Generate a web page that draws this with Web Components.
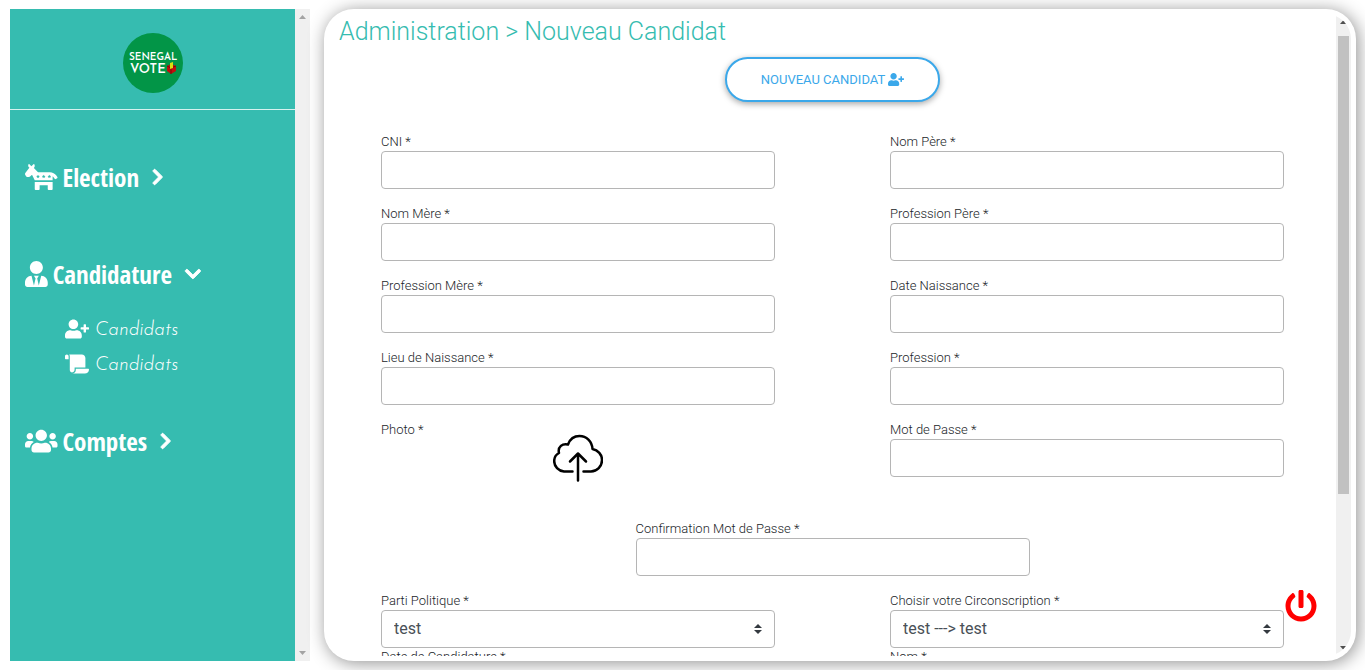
<!DOCTYPE html>
<html lang="fr">
<head>
<meta charset="utf-8">
<meta name="viewport" content="width=device-width, initial-scale=1">
<title>Senegal Vote - Administration</title>
<style>
  html, body { margin: 0; height: 100%; background: #fff; }
  body { font-family: Roboto, sans-serif; color: #444; overflow: hidden; }
</style>
</head>
<body>
<sv-app>
  <sv-sidebar slot="sidebar">
    <sv-menu icon="democrat" label="Election"></sv-menu>
    <sv-menu icon="tie" label="Candidature" open>
      <sv-menu-link icon="plus">Candidats</sv-menu-link>
      <sv-menu-link icon="scroll">Candidats</sv-menu-link>
    </sv-menu>
    <sv-menu icon="users" label="Comptes"></sv-menu>
  </sv-sidebar>
  <sv-panel heading="Administration &gt; Nouveau Candidat">
    <sv-button slot="action" icon="plus">NOUVEAU CANDIDAT</sv-button>
    <sv-form>
      <sv-field label="CNI *"></sv-field>
      <sv-field label="Nom Père *"></sv-field>
      <sv-field label="Nom Mère *"></sv-field>
      <sv-field label="Profession Père *"></sv-field>
      <sv-field label="Profession Mère *"></sv-field>
      <sv-field label="Date Naissance *"></sv-field>
      <sv-field label="Lieu de Naissance *"></sv-field>
      <sv-field label="Profession *"></sv-field>
      <sv-upload label="Photo *"></sv-upload>
      <sv-field label="Mot de Passe *" type="password"></sv-field>
      <sv-field class="center" label="Confirmation Mot de Passe *" type="password"></sv-field>
      <sv-select label="Parti Politique *" value="test"></sv-select>
      <sv-select label="Choisir votre Circonscription *" value="test ---&gt; test"></sv-select>
      <sv-field label="Date de Candidature *"></sv-field>
      <sv-field label="Nom *"></sv-field>
    </sv-form>
  </sv-panel>
</sv-app>

<script>
const star = x => `M${x} 211l11 22 24 4-17 17 4 24-22-11-22 11 4-24-17-17 24-4z`;
const ICONS = {
  democrat: [640, 'M637.3 256.9l-19.6-29.4c-28.2-42.3-75.3-67.5-126.1-67.5H256l-81.2-81.2c20.1-20.1 22.6-51.1 7.5-73.9-3.4-5.2-10.8-5.9-15.2-1.5l-41.8 41.8L82.4 2.4c-3.6-3.6-9.6-3-12.4 1.2-12.3 18.6-10.3 44 6.1 60.4 3.3 3.3 7.3 5.3 11.3 7.5-2.2 1.7-4.7 3.1-6.4 5.4L6.4 176.2c-7.3 9.7-8.4 22.7-3 33.5l14.3 28.6c5.4 10.8 16.5 17.7 28.6 17.7h31c8.5 0 16.6-3.4 22.6-9.4L138 212l54 108h352v-77.8c16.2 12.2 18.3 17.6 40.1 50.3 4.9 7.4 14.8 9.3 22.2 4.4l26.6-17.7c7.3-5 9.3-14.9 4.4-22.3zM192 496c0 8.8 7.2 16 16 16h64c8.8 0 16-7.2 16-16v-80h160v80c0 8.8 7.2 16 16 16h64c8.8 0 16-7.2 16-16V352H192v144z' + star(256) + star(368) + star(480)],
  tie: [448, 'M224 256c70.7 0 128-57.3 128-128S294.7 0 224 0 96 57.3 96 128s57.3 128 128 128zm95.8 32.6L272 480l-32-136 32-56h-96l32 56-32 136-47.8-191.4C56.9 292 0 350.3 0 422.4V464c0 26.5 21.5 48 48 48h352c26.5 0 48-21.5 48-48v-41.6c0-72.1-56.9-130.4-128.2-133.8z'],
  users: [640, 'M96 224c35.3 0 64-28.7 64-64s-28.7-64-64-64-64 28.7-64 64 28.7 64 64 64zm448 0c35.3 0 64-28.7 64-64s-28.7-64-64-64-64 28.7-64 64 28.7 64 64 64zm32 32h-64c-17.6 0-33.5 7.1-45.1 18.6 40.3 22.1 68.9 62 75.1 109.4h66c17.7 0 32-14.3 32-32v-32c0-35.3-28.7-64-64-64zm-256 0c61.9 0 112-50.1 112-112S381.9 32 320 32 208 82.1 208 144s50.1 112 112 112zm76.8 32h-8.3c-20.8 10-43.9 16-68.5 16s-47.6-6-68.5-16h-8.3C179.6 288 128 339.6 128 403.2V432c0 26.5 21.5 48 48 48h288c26.5 0 48-21.5 48-48v-28.8c0-63.6-51.6-115.2-115.2-115.2zm-223.7-13.4C161.5 263.1 145.6 256 128 256H64c-35.3 0-64 28.7-64 64v32c0 17.7 14.3 32 32 32h65.9c6.3-47.4 34.9-87.3 75.2-109.4z'],
  plus: [640, 'M624 208h-64v-64c0-8.8-7.2-16-16-16h-32c-8.8 0-16 7.2-16 16v64h-64c-8.8 0-16 7.2-16 16v32c0 8.8 7.2 16 16 16h64v64c0 8.8 7.2 16 16 16h32c8.8 0 16-7.2 16-16v-64h64c8.8 0 16-7.2 16-16v-32c0-8.8-7.2-16-16-16zm-400 48c70.7 0 128-57.3 128-128S294.7 0 224 0 96 57.3 96 128s57.3 128 128 128zm89.6 32h-16.7c-22.2 10.2-46.9 16-72.9 16s-50.6-5.8-72.9-16h-16.7C60.2 288 0 348.2 0 422.4V464c0 26.5 21.5 48 48 48h352c26.5 0 48-21.5 48-48v-41.6c0-74.2-60.2-134.4-134.4-134.4z'],
  scroll: [640, 'M48 0C21.53 0 0 21.53 0 48v64c0 8.84 7.16 16 16 16h80V48C96 21.53 74.47 0 48 0zm208 412.57V352h288V96c0-52.94-43.06-96-96-96H111.59C121.74 13.41 128 29.92 128 48v368c0 38.87 34.65 69.65 74.75 63.12C234.22 474 256 444.46 256 412.57zM288 384v32c0 52.93-43.06 96-96 96h336c61.86 0 112-50.14 112-112 0-8.84-7.16-16-16-16H288z'],
  right: [320, 'M285.476 272.971L91.132 467.314c-9.373 9.373-24.569 9.373-33.941 0l-22.667-22.667c-9.357-9.357-9.375-24.522-.04-33.901L188.505 256 34.484 101.255c-9.335-9.379-9.317-24.544.04-33.901l22.667-22.667c9.373-9.373 24.569-9.373 33.941 0L285.475 239.03c9.373 9.372 9.373 24.568.001 33.941z'],
  down: [448, 'M207.029 381.476L12.686 187.132c-9.373-9.373-9.373-24.569 0-33.941l22.667-22.667c9.357-9.357 24.522-9.375 33.901-.04L224 284.505l154.745-154.021c9.379-9.335 24.544-9.317 33.901.04l22.667 22.667c9.373 9.373 9.373 24.569 0 33.941L240.971 381.476c-9.373 9.372-24.569 9.372-33.942 0z'],
  power: [512, 'M400 54.1c63 45 104 118.6 104 201.9 0 136.8-110.8 247.7-247.5 248C120 504.3 8.2 393 8 256.4 7.9 173.1 48.9 99.3 111.8 54.2c11.7-8.3 28-4.8 35 7.7L162.6 90c5.9 10.5 3.1 23.8-6.6 31-41.5 30.8-68 79.6-68 134.9-.1 92.3 74.5 168.1 168 168.1 91.6 0 168.6-74.2 168-169.1-.3-51.8-24.7-101.8-68.1-134-9.7-7.2-12.4-20.5-6.5-30.9l15.8-28.1c7-12.4 23.2-16.1 34.8-7.8zM296 264V24c0-13.3-10.7-24-24-24h-32c-13.3 0-24 10.7-24 24v240c0 13.3 10.7 24 24 24h32c13.3 0 24-10.7 24-24z']
};
const svg = (name, cls = '') => `<svg class="${cls}" viewBox="0 0 ${ICONS[name][0]} 512" fill="currentColor" fill-rule="evenodd" aria-hidden="true"><path d="${ICONS[name][1]}"/></svg>`;

const define = (tag, render) => customElements.define(tag, class extends HTMLElement {
  constructor() {
    super();
    this.attachShadow({ mode: 'open' }).innerHTML =
      '<style>*{box-sizing:border-box}</style>' + render(this);
  }
});

define('sv-app', () => `
<style>
  :host { display: flex; gap: 14px; box-sizing: border-box; height: 100vh; padding: 9px 9px 9px 10px; }
  ::slotted(sv-sidebar) { flex: 0 0 300px; }
  ::slotted(sv-panel) { flex: 1; min-width: 0; }
</style>
<slot name="sidebar"></slot><slot></slot>`);

define('sv-scrollbar', el => `
<style>
  :host { display: flex; flex-direction: column; flex: 0 0 15px; background: #f0f0f0; color: #505050; }
  :host([idle]) { color: #a3a3a3; }
  svg { display: block; width: 15px; height: 17px; flex: none; }
  .track { flex: 1; padding: 5px 2px 0; }
  .thumb { height: 76%; background: #c1c1c1; }
</style>
<svg viewBox="0 0 15 17" fill="currentColor"><path d="M4 10h7L7.500 6z"/></svg>
<div class="track">${el.hasAttribute('idle') ? '' : '<div class="thumb"></div>'}</div>
<svg viewBox="0 0 15 17" fill="currentColor"><path d="M4 7h7L7.500 11z"/></svg>`);

define('sv-logo', () => `
<style>
  :host { display: block; width: 60px; height: 60px; }
  svg { display: block; }
</style>
<svg width="60" height="60" viewBox="0 0 60 60" role="img" aria-label="Senegal Vote">
  <circle cx="30" cy="30" r="30" fill="#029547"/>
  <g fill="#fff" font-family="Josefin Sans, Lato, sans-serif" font-weight="600">
    <text x="6" y="27" font-size="10">SENEGAL</text>
    <text x="7" y="40" font-size="13">VOTE</text>
  </g>
  <path d="M44 33l4-2 5 2v5l-5 3-4-3z" fill="#c20d0d"/>
  <path d="M48 35v6M44 33l4 2 5-2" fill="none" stroke="#760b0b"/>
  <path d="M47 30l3-1v6l-3 1z" fill="#d7df10"/>
</svg>`);

define('sv-sidebar', () => `
<style>
  :host { display: flex; }
  .body { flex: 1; background: #36bcb0; color: #fff; overflow-y: auto; scrollbar-width: none; }
  header { display: flex; justify-content: center; height: 101px; padding-top: 24px; border-bottom: 1px solid #d7f2ef; }
  nav { padding: 47px 15px 0; }
</style>
<div class="body">
  <header><sv-logo></sv-logo></header>
  <nav><slot></slot></nav>
</div>
<sv-scrollbar idle></sv-scrollbar>`);

define('sv-menu', el => `
<style>
  :host { display: block; padding-bottom: 57px; }
  :host([open]) { padding-bottom: 40px; }
  button { display: flex; align-items: center; height: 40px; padding: 0; border: 0; background: none; color: inherit;
    font: 700 25px/40px "Open Sans Condensed", "Liberation Sans Narrow", "Open Sans", sans-serif; }
  .icon { height: 26px; margin-right: 5px; }
  .arrow { height: 18px; margin-left: 13px; overflow: visible; stroke: currentColor; stroke-width: 28; }
  ul { display: flex; flex-direction: column; margin: 0; padding: 17px 0 0 40px; }
  ul[hidden] { display: none; }
</style>
<button type="button" aria-expanded="${el.hasAttribute('open')}">
  ${svg(el.getAttribute('icon'), 'icon')}<span>${el.getAttribute('label')}</span>${svg(el.hasAttribute('open') ? 'down' : 'right', 'arrow')}
</button>
<ul ${el.hasAttribute('open') ? '' : 'hidden'}><slot></slot></ul>`);

define('sv-menu-link', el => `
<style>
  :host { display: block; }
  a { display: flex; align-items: center; gap: 6px; height: 35px; color: inherit; text-decoration: none;
    font: italic 300 19px/20px "Josefin Sans", Lato, sans-serif; }
  svg { width: 24px; height: 20px; }
  span { padding-top: 5px; }
</style>
<a href="#">${svg(el.getAttribute('icon'))}<span><slot></slot></span></a>`);

define('sv-panel', el => `
<style>
  :host { display: flex; position: relative; box-sizing: border-box; padding: 5px; border-radius: 30px; background: #fff;
    box-shadow: 2px 2px 18px #909090; }
  .clip { display: flex; flex: 1; min-width: 0; border-radius: 25px; overflow: hidden; }
  .body { flex: 1; min-width: 0; overflow-y: auto; scrollbar-width: none; }
  h1 { margin: 0 10px 7px; color: #36bcb0; font: 300 25px/36px Roboto, sans-serif; }
  .action { display: flex; justify-content: center; margin-bottom: 31px; }
  .logout { position: absolute; right: 39px; bottom: 39px; width: 32px; height: 32px; padding: 0; border: 0; background: none; color: red; }
  .logout svg { display: block; width: 32px; height: 32px; }
</style>
<div class="clip">
  <div class="body">
    <h1>${el.getAttribute('heading').replace('>', '&gt;')}</h1>
    <div class="action"><slot name="action"></slot></div>
    <slot></slot>
  </div>
  <sv-scrollbar></sv-scrollbar>
</div>
<button class="logout" type="button" aria-label="Déconnexion">${svg('power')}</button>`);

define('sv-button', el => `
<style>
  :host { display: block; }
  button { display: flex; align-items: center; gap: 3px; height: 45px; padding: 0 34px; border: 2px solid #3ba8ea; border-radius: 30px;
    background: #fff; color: #3ba8ea; font: 400 13px/20px Roboto, sans-serif; box-shadow: 0 2px 6px rgba(0,0,0,.35); }
  svg { width: 16px; height: 13px; }
</style>
<button type="button"><span><slot></slot></span>${svg(el.getAttribute('icon'))}</button>`);

define('sv-form', () => `
<style>
  :host { display: block; }
  form { display: grid; grid-template-columns: 1fr 1fr; column-gap: 115px; padding: 0 52px 40px; }
  ::slotted(*) { min-width: 0; }
  ::slotted(.center) { grid-column: 1 / -1; justify-self: center; width: calc((100% - 115px) / 2); }
</style>
<form><slot></slot></form>`);

const FIELD = `
  :host { display: block; }
  label { display: block; font: 300 13px/18px Roboto, sans-serif; color: #212529; }
  input, select { display: block; width: 100%; height: 38px; margin: 0; padding: 0 12px; border: 1px solid #b5b5b5; border-radius: 4px;
    background: #fff; color: #495057; font: 400 16px/24px Roboto, sans-serif; }`;

define('sv-field', el => `
<style>${FIELD}
  input { margin-bottom: 16px; }
</style>
<label for="f">${el.getAttribute('label')}</label>
<input id="f" type="${el.getAttribute('type') || 'text'}">`);

define('sv-select', el => `
<style>${FIELD}
  .box { display: grid; align-items: center; }
  .box > * { grid-area: 1 / 1; }
  select { appearance: none; }
  svg { justify-self: end; width: 8px; height: 10px; margin-right: 13px; pointer-events: none; }
</style>
<label for="f">${el.getAttribute('label')}</label>
<div class="box">
  <select id="f"><option>${el.getAttribute('value').replace('>', '&gt;')}</option></select>
  <svg viewBox="0 0 4 5" fill="#343a40" aria-hidden="true"><path d="M2 0L0 2h4zm0 5L0 3h4z"/></svg>
</div>`);

define('sv-upload', el => `
<style>${FIELD}
  :host { display: grid; height: 99px; }
  label { grid-area: 1 / 1; align-self: start; }
  .drop { justify-self: center; padding-top: 12px; }
  .drop svg { display: block; width: 50px; height: 50px; }
  input { display: none; }
</style>
<label for="f">${el.getAttribute('label')}</label>
<label class="drop" for="f" aria-label="Choisir une photo">
  <svg viewBox="0 0 50 50" fill="none" stroke="#000" stroke-width="2.500" stroke-linecap="round" stroke-linejoin="round" aria-hidden="true">
    <path d="M19.500 38.500H11C5.500 38 1.200 33.500 1.200 28C1.200 24.500 3 21.500 6 20C4.500 14 9.500 10 15 11.500C17 6 21.500 3 26.500 3C33.500 3 39 8.500 39.500 16C45 17 49 21.500 49 27C49 33.500 44 38.500 38 38.500H30.500"/>
    <path d="M25 47.500V20.500M17 28.500L25 20.500L33 28.500"/>
  </svg>
</label>
<input id="f" type="file">`);
</script>
</body>
</html>
